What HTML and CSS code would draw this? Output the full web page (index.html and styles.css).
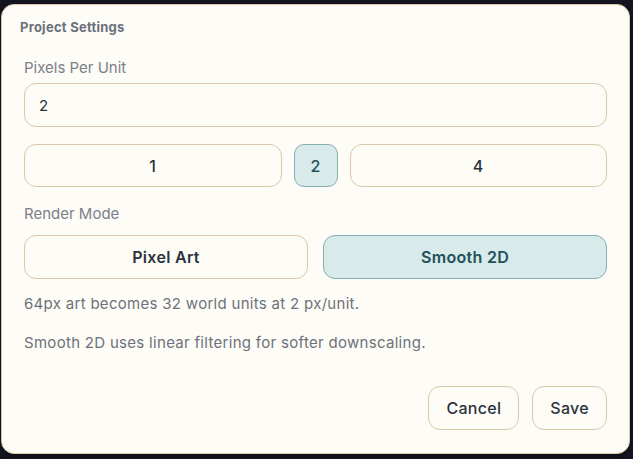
FILE: index.html
```html
<!DOCTYPE html>
<html>
<head>
    <meta charset="utf-8" />
    <title>Project Settings</title>
    <link rel="stylesheet" href="styles.css">
</head>
<body>
    <div class="dialog">
        <!-- 标题 -->
        <div class="dialog-header">
            <h2 class="dialog-title">Project Settings</h2>
        </div>

        <div class="dialog-body">
            <label class="field-label" for="ppuInput">Pixels Per Unit</label>
            <input type="text" id="ppuInput" class="text-input" value="2">

            <div class="ppu-presets">
                <button class="option">1</button>
                <button class="option option-small selected">2</button>
                <button class="option">4</button>
            </div>

            <div class="field-label section-gap">Render Mode</div>
            <div class="mode-options">
                <button class="option option-strong">Pixel Art</button>
                <button class="option option-strong selected">Smooth 2D</button>
            </div>

            <p class="note note-first">64px art becomes 32 world units at 2 px/unit.</p>
            <p class="note">Smooth 2D uses linear filtering for softer downscaling.</p>

            <div class="dialog-footer">
                <button class="option footer-button">Cancel</button>
                <button class="option footer-button">Save</button>
            </div>
        </div>
    </div>
</body>
</html>
```

FILE: styles.css
```css
/* 全局样式 */
body {
    margin: 0;
    padding: 4px 3px 4px 1px;
    background-color: #141521;
    font-family: Inter, "Noto Sans", sans-serif;
    color: #2b3340;
}

/* 对话框 */
.dialog {
    background-color: #fdfcf6;
    border: 1px solid #d9c9aa;
    border-radius: 13px;
    box-shadow: 0 2px 6px rgba(0, 0, 0, 0.35);
}

.dialog-header {
    padding: 13px 18px 0;
}

.dialog-title {
    margin: 0;
    font-size: 13px;
    line-height: 18px;
    font-weight: 700;
    letter-spacing: 0.25px;
    color: #6b717b;
}

.dialog-body {
    padding: 0 22px 23px;
}

/* 标签 */
.field-label {
    display: block;
    margin-top: 22px;
    font-size: 15px;
    line-height: 20px;
    color: #7b8089;
}

.section-gap {
    margin-top: 17px;
}

/* 输入框 */
.text-input {
    display: block;
    box-sizing: border-box;
    width: 100%;
    height: 44px;
    margin-top: 5px;
    padding: 0 14px;
    border: 1px solid #d9c9aa;
    border-radius: 12px;
    background-color: #fdfcf6;
    font-family: inherit;
    font-size: 15px;
    color: #2b3340;
    outline: none;
}

/* 选项按钮 */
.option {
    box-sizing: border-box;
    height: 44px;
    padding: 0 17px;
    border: 1px solid #d9c9aa;
    border-radius: 12px;
    background-color: #fdfcf6;
    font-family: inherit;
    font-size: 16px;
    font-weight: 500;
    letter-spacing: 0.3px;
    color: #2b3340;
    cursor: pointer;
}

.option.selected {
    background-color: #d8eaea;
    border-color: #86aeb1;
    color: #21515a;
}

.option-strong {
    font-weight: 600;
}

.ppu-presets {
    display: grid;
    grid-template-columns: 1fr 44px 1fr;
    gap: 12px;
    margin-top: 17px;
}

.ppu-presets .option {
    height: 43px;
}

.option-small {
    padding: 0;
    border-radius: 10px;
}

.mode-options {
    display: grid;
    grid-template-columns: 1fr 1fr;
    gap: 15px;
    margin-top: 11px;
}

/* 说明文字 */
.note {
    margin: 19px 0 0;
    font-size: 15px;
    line-height: 20px;
    letter-spacing: 0.3px;
    color: #6d727a;
}

.note-first {
    margin-top: 15px;
}

/* 底部按钮 */
.dialog-footer {
    display: flex;
    justify-content: flex-end;
    gap: 13px;
    margin-top: 33px;
}
```
